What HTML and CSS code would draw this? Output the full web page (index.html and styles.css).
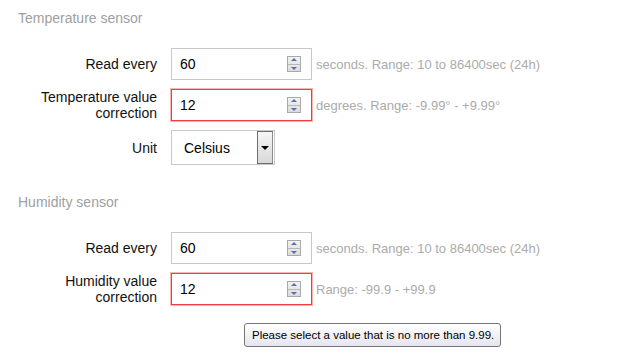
FILE: index.html
```html
<!DOCTYPE html>
<html>
<head>
<meta charset="utf-8">
<link rel="stylesheet" href="styles.css">
</head>
<body>
<div class="page">
  <section class="sensor">
    <h2 class="title">Temperature sensor</h2>
    <div class="rows">
      <div class="row">
        <label class="label">Read every</label>
        <div class="num"><span class="val">60</span><span class="spin"><span class="up"></span><span class="down"></span></span></div>
        <span class="hint">seconds. Range: 10 to 86400sec (24h)</span>
      </div>
      <div class="row">
        <label class="label">Temperature value<br>correction</label>
        <div class="num invalid"><span class="val">12</span><span class="spin"><span class="up"></span><span class="down"></span></span></div>
        <span class="hint">degrees. Range: -9.99° - +9.99°</span>
      </div>
      <div class="row">
        <label class="label">Unit</label>
        <div class="select"><span class="val">Celsius</span><span class="drop"><span class="tri"></span></span></div>
        <span></span>
      </div>
    </div>
  </section>
  <section class="sensor second">
    <h2 class="title">Humidity sensor</h2>
    <div class="rows">
      <div class="row">
        <label class="label">Read every</label>
        <div class="num"><span class="val">60</span><span class="spin"><span class="up"></span><span class="down"></span></span></div>
        <span class="hint">seconds. Range: 10 to 86400sec (24h)</span>
      </div>
      <div class="row">
        <label class="label">Humidity value<br>correction</label>
        <div class="num invalid"><span class="val">12</span><span class="spin"><span class="up"></span><span class="down"></span></span></div>
        <span class="hint">Range: -99.9 - +99.9</span>
      </div>
    </div>
  </section>
  <div class="tooltip">Please select a value that is no more than 9.99.</div>
</div>
</body>
</html>
```
FILE: styles.css
```css
html, body {
  margin: 0;
  padding: 0;
  background: #fff;
}
body {
  font-family: "Liberation Sans", Arial, sans-serif;
  color: #000;
}
.page {
  position: relative;
  width: 624px;
  height: 357px;
  overflow: hidden;
}
.sensor {
  padding: 9px 0 0 18px;
}
.sensor.second {
  padding-top: 28px;
}
.title {
  margin: 0;
  font-size: 14px;
  font-weight: normal;
  line-height: 18px;
  color: #a0a0a0;
}
.rows {
  margin-top: 21px;
  display: flex;
  flex-direction: column;
  gap: 9px;
}
.row {
  display: grid;
  grid-template-columns: 139px auto 1fr;
  column-gap: 14px;
  align-items: center;
}
.label {
  text-align: right;
  font-size: 14px;
  line-height: 16px;
  color: #111;
}
.num {
  box-sizing: border-box;
  width: 141px;
  height: 32px;
  border: 1px solid #c8c8c8;
  display: flex;
  align-items: center;
  justify-content: space-between;
  padding: 0 10px 0 8px;
  font-size: 14px;
}
.num.invalid {
  border-color: #f03c3c;
  box-shadow: 0 0 0 1px rgba(246, 130, 130, 0.6);
}
.spin {
  box-sizing: border-box;
  width: 14px;
  height: 16px;
  border: 1px solid #a9a9a9;
  background: linear-gradient(#f2f2f2, #dcdcdc);
  display: flex;
  flex-direction: column;
}
.up, .down {
  flex: 1;
  position: relative;
}
.up {
  border-bottom: 1px solid #b8b8b8;
}
.up::after, .down::after {
  content: "";
  position: absolute;
  left: 50%;
  top: 50%;
  margin-left: -3px;
  border-left: 3px solid transparent;
  border-right: 3px solid transparent;
}
.up::after {
  margin-top: -2px;
  border-bottom: 3px solid #5a6fb0;
}
.down::after {
  margin-top: -1px;
  border-top: 3px solid #5a6fb0;
}
.hint {
  margin-left: -10px;
  font-size: 13px;
  color: #ababab;
  white-space: nowrap;
}
.select {
  box-sizing: border-box;
  width: 104px;
  height: 35px;
  border: 1px solid #c8c8c8;
  display: flex;
  align-items: center;
  justify-content: space-between;
  padding: 0 1px 0 12px;
  font-size: 14px;
}
.drop {
  box-sizing: border-box;
  width: 16px;
  height: 33px;
  border: 1px solid #6e6e6e;
  border-right-color: #8a8a8a;
  background: linear-gradient(#f6f6f6, #d8d8d8);
  display: flex;
  align-items: center;
  justify-content: center;
}
.tri {
  width: 0;
  height: 0;
  border-left: 4px solid transparent;
  border-right: 4px solid transparent;
  border-top: 4px solid #000;
}
.tooltip {
  position: absolute;
  left: 244px;
  top: 323px;
  box-sizing: border-box;
  width: 257px;
  height: 24px;
  padding: 0 7px;
  border: 1px solid #767676;
  border-radius: 3px;
  background: linear-gradient(#ffffff, #e4e5f0);
  font-family: "Liberation Sans", Tahoma, sans-serif;
  font-size: 11.5px;
  line-height: 22px;
  color: #000;
  white-space: nowrap;
}
```
